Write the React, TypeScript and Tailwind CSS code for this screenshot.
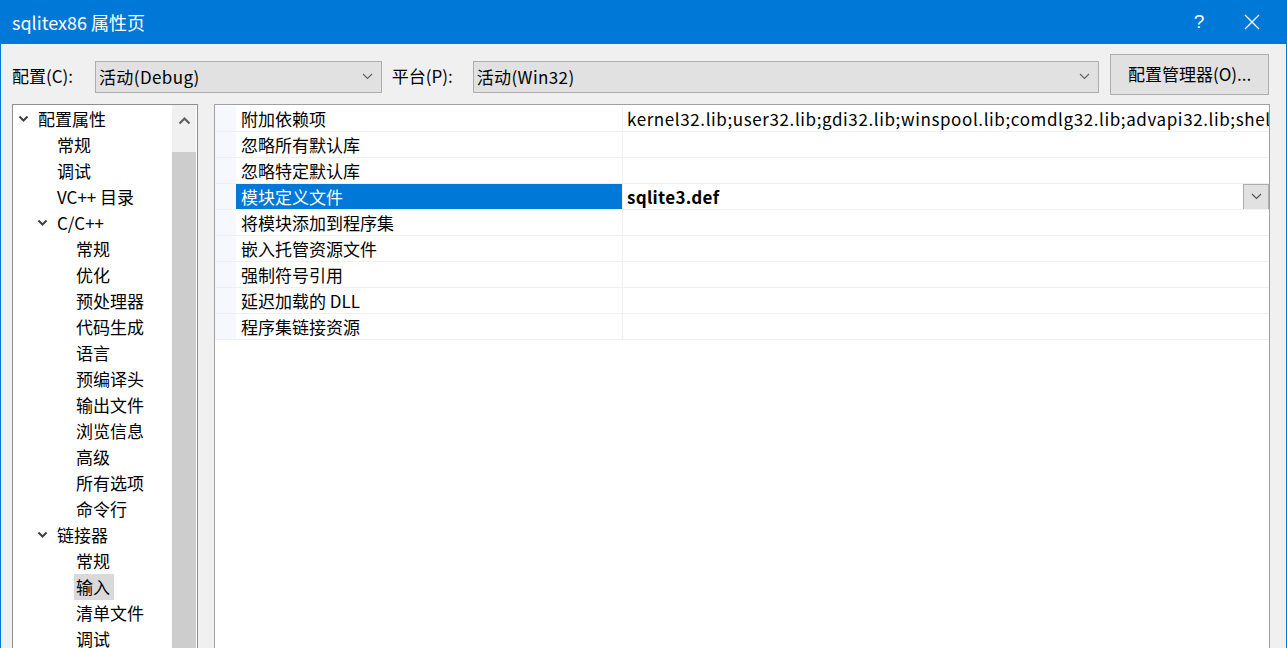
import React from 'react';

const FONT = '"Noto Sans CJK SC", "Noto Sans", sans-serif';

type TreeItem = { label: string; level: number; expanded?: boolean; selected?: boolean };

const tree: TreeItem[] = [
  { label: '配置属性', level: 0, expanded: true },
  { label: '常规', level: 1 },
  { label: '调试', level: 1 },
  { label: 'VC++ 目录', level: 1 },
  { label: 'C/C++', level: 1, expanded: true },
  { label: '常规', level: 2 },
  { label: '优化', level: 2 },
  { label: '预处理器', level: 2 },
  { label: '代码生成', level: 2 },
  { label: '语言', level: 2 },
  { label: '预编译头', level: 2 },
  { label: '输出文件', level: 2 },
  { label: '浏览信息', level: 2 },
  { label: '高级', level: 2 },
  { label: '所有选项', level: 2 },
  { label: '命令行', level: 2 },
  { label: '链接器', level: 1, expanded: true },
  { label: '常规', level: 2 },
  { label: '输入', level: 2, selected: true },
  { label: '清单文件', level: 2 },
  { label: '调试', level: 2 },
];

const props: { name: string; value?: string; selected?: boolean }[] = [
  { name: '附加依赖项', value: 'kernel32.lib;user32.lib;gdi32.lib;winspool.lib;comdlg32.lib;advapi32.lib;shell32.lib;ole32.lib;oleaut32.lib;uuid.lib' },
  { name: '忽略所有默认库' },
  { name: '忽略特定默认库' },
  { name: '模块定义文件', value: 'sqlite3.def', selected: true },
  { name: '将模块添加到程序集' },
  { name: '嵌入托管资源文件' },
  { name: '强制符号引用' },
  { name: '延迟加载的 DLL' },
  { name: '程序集链接资源' },
];

function Chevron({ className = '' }: { className?: string }) {
  return (
    <svg width="11" height="7" viewBox="0 0 11 7" className={className}>
      <path d="M1 1 L5.5 5.5 L10 1" fill="none" stroke="currentColor" strokeWidth="1.1" />
    </svg>
  );
}

function TreeChevron() {
  return (
    <svg width="11" height="8" viewBox="0 0 11 8" className="text-[#404040]">
      <path d="M1.5 1.5 L5.5 5.5 L9.5 1.5" fill="none" stroke="currentColor" strokeWidth="2" />
    </svg>
  );
}

function Combo({ text, className }: { text: string; className: string }) {
  return (
    <div className={`h-[32px] bg-[#e1e1e1] border border-[#adadad] flex items-center pl-[3px] pr-[8px] ${className}`}>
      <span className="flex-1 text-[17px] text-black leading-none tracking-[0.4px]">{text}</span>
      <Chevron className="text-[#606060]" />
    </div>
  );
}

export default function App() {
  return (
    <div
      className="w-[1287px] h-[648px] overflow-hidden bg-[#f0f0f0] flex flex-col border-x border-[#0078d7]"
      style={{ fontFamily: FONT }}
    >
      {/* title bar */}
      <div className="h-[44px] shrink-0 bg-[#0078d7] flex items-center text-white">
        <span className="pl-[11px] text-[18px] flex-1">sqlitex86 属性页</span>
        <span className="w-[46px] text-center text-[19px] font-light mr-[22px]" style={{ fontFamily: '"Liberation Sans", sans-serif' }}>?</span>
        <svg width="16" height="16" viewBox="0 0 16 16" className="mr-[26px]">
          <path d="M1 1 L15 15 M15 1 L1 15" stroke="white" strokeWidth="1.3" />
        </svg>
      </div>

      {/* config row */}
      <div className="h-[60px] shrink-0 flex items-center pl-[11px] pr-[17px]">
        <span className="text-[17px] w-[83px] pt-[3px]">配置(C):</span>
        <Combo text="活动(Debug)" className="w-[287px] mt-[5px]" />
        <span className="text-[17px] ml-[10px] w-[81px] pt-[3px]">平台(P):</span>
        <Combo text="活动(Win32)" className="w-[627px] mt-[5px]" />
        <div className="ml-[11px] w-[159px] h-[41px] bg-[#e1e1e1] border border-[#adadad] flex items-center justify-center text-[17px]">
          配置管理器(O)...
        </div>
      </div>

      {/* panels */}
      <div className="flex flex-1 min-h-0 pl-[11px]">
        {/* tree */}
        <div className="w-[186px] h-[560px] bg-white border border-[#8f8f8f] flex">
          <div className="flex-1 pt-[1px]">
            {tree.map((t, i) => (
              <div key={i} className="h-[26px] flex items-center text-[17px] text-black">
                <div
                  className="flex items-center"
                  style={{ paddingLeft: 4 + t.level * 19 }}
                >
                  <span className="w-[19px] flex items-center justify-start pl-[1px]">
                    {t.expanded ? <TreeChevron /> : null}
                  </span>
                  <span className={`px-[2px] leading-[26px] ${t.selected ? 'bg-[#d9d9d9] pr-[4px]' : ''}`}>{t.label}</span>
                </div>
              </div>
            ))}
          </div>
          <div className="w-[24px] bg-[#f0f0f0] flex flex-col mr-[1px]">
            <div className="h-[47px] flex items-start justify-center pt-[11px]">
              <svg width="13" height="9" viewBox="0 0 13 9">
                <path d="M1.5 7.5 L6.5 2.5 L11.5 7.5" fill="none" stroke="#606060" strokeWidth="2.2" />
              </svg>
            </div>
            <div className="flex-1 bg-[#cdcdcd]" />
          </div>
        </div>

        {/* property grid */}
        <div className="ml-[16px] w-[1056px] h-[560px] bg-white border border-[#a0a0a0] pt-[1px]">
          {props.map((p, i) => (
            <div key={i} className="h-[26px] flex border-b border-[#f0f0f0]">
              <div className="w-[21px] bg-[#f5f8fd]" />
              <div
                className={`w-[387px] flex items-center pl-[5px] text-[17px] border-r border-[#f0f0f0] ${
                  p.selected ? 'bg-[#0078d7] text-white' : 'text-black'
                }`}
              >
                {p.name}
              </div>
              <div className="flex-1 min-w-0 flex items-center pl-[4px] overflow-hidden">
                <span
                  className={`flex-1 whitespace-nowrap overflow-hidden text-[17px] text-black ${
                    p.selected ? 'font-bold tracking-[0.3px]' : 'tracking-[0.6px]'
                  }`}
                >
                  {p.value}
                </span>
                {p.selected ? (
                  <div className="w-[26px] h-[26px] bg-[#e1e1e1] border border-[#adadad] flex items-center justify-center shrink-0">
                    <Chevron className="text-[#505050]" />
                  </div>
                ) : null}
              </div>
            </div>
          ))}
        </div>
      </div>
    </div>
  );
}
